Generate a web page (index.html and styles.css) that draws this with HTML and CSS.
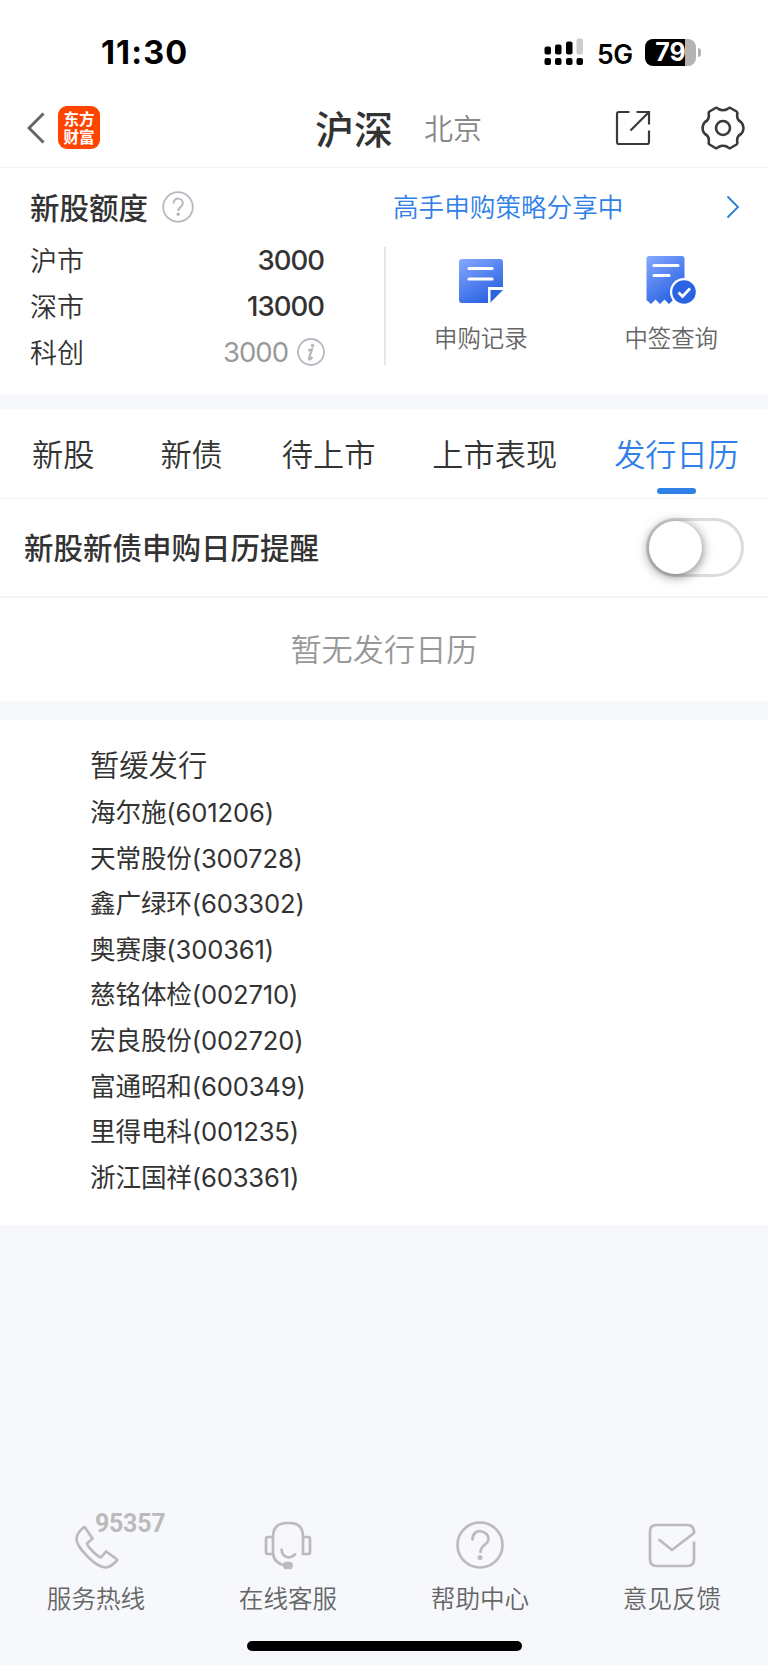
FILE: index.html
```html
<!DOCTYPE html>
<html lang="zh-CN">

<head>
    <meta charset="UTF-8">
    <meta name="viewport" content="width=device-width, initial-scale=1.0">
    <title>发行日历</title>
    <link rel="stylesheet" href="styles.css">
</head>

<body>
    <div class="status-bar">
        <span class="time">11:30</span>
        <div class="status-right">
            <svg class="signal" width="40" height="28" viewBox="0 0 40 28">
                <rect x="0.5" y="8.5" width="6.5" height="8" rx="2" />
                <rect x="11" y="6.5" width="6.5" height="10" rx="2" />
                <rect x="22" y="3.5" width="6.5" height="13" rx="2" />
                <rect x="32.5" y="0.5" width="6.5" height="16" rx="2" fill="#ccc" />
                <rect x="0.5" y="20" width="6.5" height="7" rx="2" />
                <rect x="11" y="20" width="6.5" height="7" rx="2" />
                <rect x="22" y="20" width="6.5" height="7" rx="2" />
                <rect x="32.5" y="20" width="6.5" height="7" rx="2" />
            </svg>
            <span class="network">5G</span>
            <div class="battery"><span>79</span></div>
            <i class="battery-tip"></i>
        </div>
    </div>

    <header class="header">
        <div class="header-left">
            <svg width="18" height="32" viewBox="0 0 18 32" fill="none" stroke="#666" stroke-width="3">
                <path d="M16.5 1.5L2 16l14.5 14.5" />
            </svg>
            <div class="logo"><span>东方</span><span>财富</span></div>
        </div>
        <div class="header-tabs">
            <span class="market active">沪深</span>
            <span class="market">北京</span>
        </div>
        <div class="header-right">
            <svg width="36" height="36" viewBox="0 0 36 36" fill="none" stroke="#3a3a3a" stroke-width="2.2">
                <path d="M14.5 2H4a2 2 0 0 0-2 2v28a2 2 0 0 0 2 2h28a2 2 0 0 0 2-2V20.500" />
                <path d="M21.500 2H34v12.500M34 2L15.500 20.500" />
            </svg>
            <svg width="44" height="44" viewBox="0 0 44 44" fill="none" stroke="#3a3a3a" stroke-width="2.6" stroke-linejoin="round">
                <path d="M14.500 2Q16 1.300 17.500 3Q22 5.500 26.500 3Q28 1.300 29.500 2L35.500 5.500Q36.800 6.500 36.200 8.500C35.800 12.500 37 14.500 40 16Q42.500 18.500 42.500 22Q42.500 25.500 40 28C37 29.500 35.800 31.500 36.200 35.500Q36.800 37.500 35.500 38.500L29.500 42Q28 42.700 26.500 41Q22 38.500 17.500 41Q16 42.700 14.500 42L8.500 38.500Q7.200 37.500 7.800 35.500C8.200 31.500 7 29.500 4 28Q1.500 25.500 1.500 22Q1.500 18.500 4 16C7 14.500 8.200 12.500 7.800 8.500Q7.200 6.500 8.500 5.500Z" />
                <circle cx="22" cy="22" r="7" />
            </svg>
        </div>
    </header>

    <section class="quota">
        <div class="quota-head">
            <h2>新股额度</h2>
            <svg class="help" width="32" height="32" viewBox="0 0 32 32" fill="none" stroke="#b5b8bf" stroke-width="1.8">
                <circle cx="16" cy="16" r="14.800" />
                <path d="M11.500 12.500C11.500 5.500 21 6.500 20.800 12.500C20.600 16 16.200 16 16.200 20" stroke-width="2" />
                <circle cx="16.200" cy="23.200" r="1.700" fill="#b5b8bf" stroke="none" />
            </svg>
            <a class="strategy">高手申购策略分享中</a>
            <svg class="arrow" width="14" height="24" viewBox="0 0 14 24" fill="none" stroke="#2b7cd3" stroke-width="1.800">
                <path d="M1.500 1.500L12 12 1.500 22.500" />
            </svg>
        </div>
        <div class="quota-body">
            <div class="quota-list">
                <div class="quota-row"><span>沪市</span><b>3000</b></div>
                <div class="quota-row"><span>深市</span><b>13000</b></div>
                <div class="quota-row muted">
                    <span>科创</span><b>3000</b>
                    <svg width="28" height="28" viewBox="0 0 28 28" fill="none" stroke="#b5b8bf" stroke-width="1.800">
                        <circle cx="14" cy="14" r="13" />
                        <circle cx="15.500" cy="7.500" r="1.800" fill="#b5b8bf" stroke="none" />
                        <path d="M11.200 12.300q3-.5 3.500-.8l-2.500 8.500q-.5 1.700 1 1.200 1.300-.7 2.200-2.200" stroke-width="2.400" />
                    </svg>
                </div>
            </div>
            <div class="quota-actions">
                <div class="action">
                    <svg width="50" height="50" viewBox="0 0 50 50">
                        <defs>
                            <linearGradient id="blue" x1="0.100" y1="0" x2="0.700" y2="1">
                                <stop offset="0" stop-color="#82a5ff" />
                                <stop offset="1" stop-color="#2560df" />
                            </linearGradient>
                        </defs>
                        <path d="M6 4h38a3 3 0 0 1 3 3v25H32v16H6a3 3 0 0 1-3-3V7a3 3 0 0 1 3-3z" fill="url(#blue)" />
                        <path d="M34.500 35H47L34.500 47.500z" fill="#2b63dd" />
                        <path d="M13 13.500h23M13 24h23" stroke="#fff" stroke-width="3.200" stroke-linecap="round" />
                    </svg>
                    <span>申购记录</span>
                </div>
                <div class="action">
                    <svg width="50" height="50" viewBox="0 0 50 50">
                        <path d="M3 1h32.500a3 3 0 0 1 3 3v43l-3-1-3.500 3-4.500-4.500L23 49l-4.500-4.500L14 49l-4.500-4.500L5 49l-4.500-4V3.500A2.500 2.500 0 0 1 3 1z" fill="url(#blue)" />
                        <path d="M8 10.500h24M8 20.500h15" stroke="#fff" stroke-width="3.200" stroke-linecap="round" />
                        <circle cx="38" cy="37" r="14" fill="#fff" />
                        <circle cx="38" cy="37" r="11.800" fill="#2b64e2" />
                        <path d="M32.500 37.500l4 4 7.500-8" fill="none" stroke="#fff" stroke-width="2.800" />
                    </svg>
                    <span>中签查询</span>
                </div>
            </div>
        </div>
    </section>

    <nav class="tabs">
        <a class="tab">新股</a>
        <a class="tab">新债</a>
        <a class="tab">待上市</a>
        <a class="tab">上市表现</a>
        <a class="tab active">发行日历</a>
    </nav>

    <div class="remind">
        <span>新股新债申购日历提醒</span>
        <div class="switch"></div>
    </div>
    <div class="empty">暂无发行日历</div>

    <section class="suspended">
        <h3>暂缓发行</h3>
        <ul>
            <li>海尔施(601206)</li>
            <li>天常股份(300728)</li>
            <li>鑫广绿环(603302)</li>
            <li>奥赛康(300361)</li>
            <li>慈铭体检(002710)</li>
            <li>宏良股份(002720)</li>
            <li>富通昭和(600349)</li>
            <li>里得电科(001235)</li>
            <li>浙江国祥(603361)</li>
        </ul>
    </section>

    <footer class="footer">
        <div class="service">
            <svg width="50" height="50" viewBox="0 0 50 50">
                <path d="M12.500 7.500Q6 13 5.500 18.500C5 26 24 48 35.500 47.500Q40.500 46.500 46 40.500Q46.500 39.800 45.500 39L35 31.500L30 37.500C26 36 17 27.500 16 23.500L21.500 18.500L14 7.500Q13.300 6.700 12.500 7.500Z" />
            </svg>
            <em class="phone">95357</em>
            <span>服务热线</span>
        </div>
        <div class="service">
            <svg width="50" height="50" viewBox="0 0 50 50">
                <path d="M10 35V17Q10 3 24 3h3Q40 3 40 17v17h5q2 0 2-2V19q0-2-2-2h-5M10 17H5q-2 0-2 2v13q0 2 2 2h5Q11 43 22 45.500" />
                <path d="M18.500 29.500Q19 36.500 25.500 37.500Q29 37.500 32 34.500" stroke-linecap="round" />
                <rect x="21.500" y="43" width="7" height="5" rx="2" fill="#bbb" />
            </svg>
            <span>在线客服</span>
        </div>
        <div class="service">
            <svg width="50" height="50" viewBox="0 0 50 50">
                <circle cx="25" cy="25" r="22.500" />
                <path d="M17.500 19.500C17.500 7 34 10 33.500 19.500C33 25 25.500 24.500 25.500 32" stroke-linecap="round" />
                <circle cx="25" cy="37.500" r="2.500" fill="#bbb" stroke="none" />
            </svg>
            <span>帮助中心</span>
        </div>
        <div class="service">
            <svg width="50" height="50" viewBox="0 0 50 50">
                <path d="M47 22.500V39.500q0 6.500-6.500 6.500h-31Q3 46 3 39.500v-28Q3 5 9.500 5h31Q47 5 47 13L25 30 12.500 20" stroke-linejoin="round" stroke-linecap="round" />
            </svg>
            <span>意见反馈</span>
        </div>
    </footer>
    <div class="home-bar"></div>
</body>

</html>
```
FILE: styles.css
```css
* {
    box-sizing: border-box;
}

body {
    margin: 0;
    width: 768px;
    height: 1665px;
    display: flex;
    flex-direction: column;
    background: #f6f8fb;
    color: #333;
    font-family: "Noto Sans CJK SC", sans-serif;
    font-weight: 350;
}

h2,
h3,
ul {
    margin: 0;
    padding: 0;
    list-style: none;
}

svg {
    display: block;
    flex: none;
}

/* status bar */
.status-bar {
    display: flex;
    justify-content: space-between;
    height: 83px;
    padding: 32px 67px 0 101px;
    background: #fff;
    color: #000;
    font-family: Inter, sans-serif;
}

.time {
    font-size: 32.5px;
    font-weight: 700;
    letter-spacing: 1.1px;
    line-height: 42px;
}

.status-right {
    display: flex;
    align-items: center;
    height: 40px;
}

.network {
    width: 37px;
    margin: 3px 11px 0 13px;
    font-size: 26.5px;
    font-weight: 600;
    letter-spacing: -0.5px;
    line-height: 40px;
}

.battery {
    width: 51px;
    height: 27px;
    border-radius: 8px;
    background: linear-gradient(90deg, #000 40px, #b3b3b3 40px);
    color: #fff;
    font-size: 25px;
    font-weight: 700;
    line-height: 27px;
    text-align: center;
}

.battery-tip {
    width: 3px;
    height: 9px;
    margin-left: 2px;
    border-radius: 0 4px 4px 0;
    background: #b3b3b3;
}

/* header */
.header {
    display: flex;
    align-items: center;
    height: 85px;
    padding: 5px 23px 0 27px;
    border-bottom: 1px solid #f3f3f3;
    background: #fff;
}

.header-left,
.header-right {
    display: flex;
    align-items: center;
    width: 288px;
}

.header-right {
    justify-content: flex-end;
    gap: 50px;
    width: auto;
    margin: 1px 0 0 auto;
}

.logo {
    display: flex;
    flex-direction: column;
    width: 42px;
    height: 43px;
    margin-left: 13px;
    padding-top: 4px;
    border-radius: 9px;
    background: #ff4400;
    color: #fff;
    font-size: 15.5px;
    font-weight: 700;
    line-height: 17.5px;
    text-align: center;
}

.header-tabs {
    display: flex;
    align-items: center;
    gap: 31px;
    height: 44px;
    margin-bottom: 2px;
}

.market {
    color: #888;
    font-size: 29px;
    line-height: 44px;
}

.market.active {
    color: #333;
    font-size: 39px;
    font-weight: 500;
}

/* quota card */
.quota {
    height: 226px;
    padding: 17px 0 0 30px;
    background: #fff;
}

.quota-head {
    display: flex;
    align-items: center;
    height: 44px;
    padding-right: 28px;
}

.quota-head h2 {
    width: 132px;
    padding-bottom: 2px;
    font-size: 29.5px;
    font-weight: 500;
    line-height: 42px;
}

.strategy {
    margin-left: 199px;
    padding-bottom: 2px;
    color: #2f80e8;
    font-size: 25.6px;
    line-height: 42px;
}

.arrow {
    margin-left: auto;
}

.quota-body {
    display: flex;
    margin-top: 8px;
}

.quota-list {
    width: 295px;
}

.quota-row {
    display: flex;
    align-items: center;
    justify-content: space-between;
    height: 46px;
    font-size: 27px;
}

.quota-row span {
    padding-bottom: 2px;
}

.quota-row b {
    margin-right: 1px;
    font-family: Inter, sans-serif;
    font-size: 27.5px;
    font-weight: 500;
    letter-spacing: -1px;
}

.quota-row.muted b {
    margin-left: auto;
    color: #999;
    font-weight: 400;
}

.muted svg {
    margin-left: 8px;
}

.quota-actions {
    display: flex;
    justify-content: space-between;
    width: 384px;
    height: 118px;
    margin: 10px 0 0 59px;
    padding: 0 50px 0 48px;
    border-left: 2px solid #e6e6e6;
}

.action {
    display: flex;
    flex-direction: column;
    align-items: center;
    padding-top: 8px;
    color: #666;
    font-size: 23.4px;
    line-height: 34px;
}

.action svg {
    margin-bottom: 15px;
}

/* tabs */
.tabs {
    display: flex;
    gap: 57px;
    height: 90px;
    margin-top: 15px;
    padding: 22px 0 0 32px;
    border-bottom: 1px solid #f3f3f3;
    background: #fff;
}

.tab {
    position: relative;
    font-size: 31.2px;
    line-height: 44px;
}

.tab:first-child {
    margin-right: 9px;
}

.tab:nth-child(2) {
    margin-right: 2px;
}

.tab.active {
    color: #2f80e8;
}

.tab.active::after {
    content: "";
    position: absolute;
    left: 43px;
    top: 57px;
    width: 39px;
    height: 6px;
    border-radius: 3px;
    background: #2f80e8;
}

/* reminder */
.remind {
    display: flex;
    align-items: center;
    justify-content: space-between;
    height: 99px;
    padding: 0 24px;
    border-bottom: 2px solid #f5f5f5;
    background: #fff;
    font-size: 29.5px;
    font-weight: 500;
}

.remind span {
    padding-bottom: 4px;
}

.switch {
    width: 98px;
    height: 59px;
    border: 3px solid #dcdcdc;
    border-radius: 30px;
}

.switch::before {
    content: "";
    display: block;
    width: 53px;
    height: 53px;
    border-radius: 50%;
    background: #fff;
    box-shadow: 0 2px 12px rgba(0, 0, 0, 0.55);
}

.empty {
    height: 103px;
    background: #fff;
    color: #999;
    font-size: 31.2px;
    line-height: 100px;
    text-align: center;
}

/* suspended list */
.suspended {
    height: 505px;
    margin-top: 19px;
    padding: 21px 0 0 90px;
    background: #fff;
}

.suspended h3 {
    font-size: 29.3px;
    font-weight: 350;
    line-height: 44px;
    margin-bottom: 5px;
}

.suspended li {
    font-family: Inter, "Noto Sans CJK SC", sans-serif;
    font-size: 25.6px;
    font-weight: 380;
    letter-spacing: -0.15px;
    line-height: 45.6px;
}

/* footer */
.footer {
    display: flex;
    margin-top: auto;
}

.service {
    position: relative;
    display: flex;
    flex-direction: column;
    align-items: center;
    width: 192px;
    color: #666;
    font-size: 24.6px;
    line-height: 36px;
}

.service svg {
    margin-bottom: 9px;
    fill: none;
    stroke: #bbb;
    stroke-width: 2.7;
}

.phone {
    position: absolute;
    left: 95px;
    top: -14px;
    color: #bbb;
    font-family: Roboto, sans-serif;
    font-size: 25px;
    font-style: normal;
    font-weight: 700;
    letter-spacing: -0.3px;
}

.home-bar {
    width: 275px;
    height: 10px;
    margin: 26px auto 14px;
    border-radius: 5px;
    background: #000;
}
```
